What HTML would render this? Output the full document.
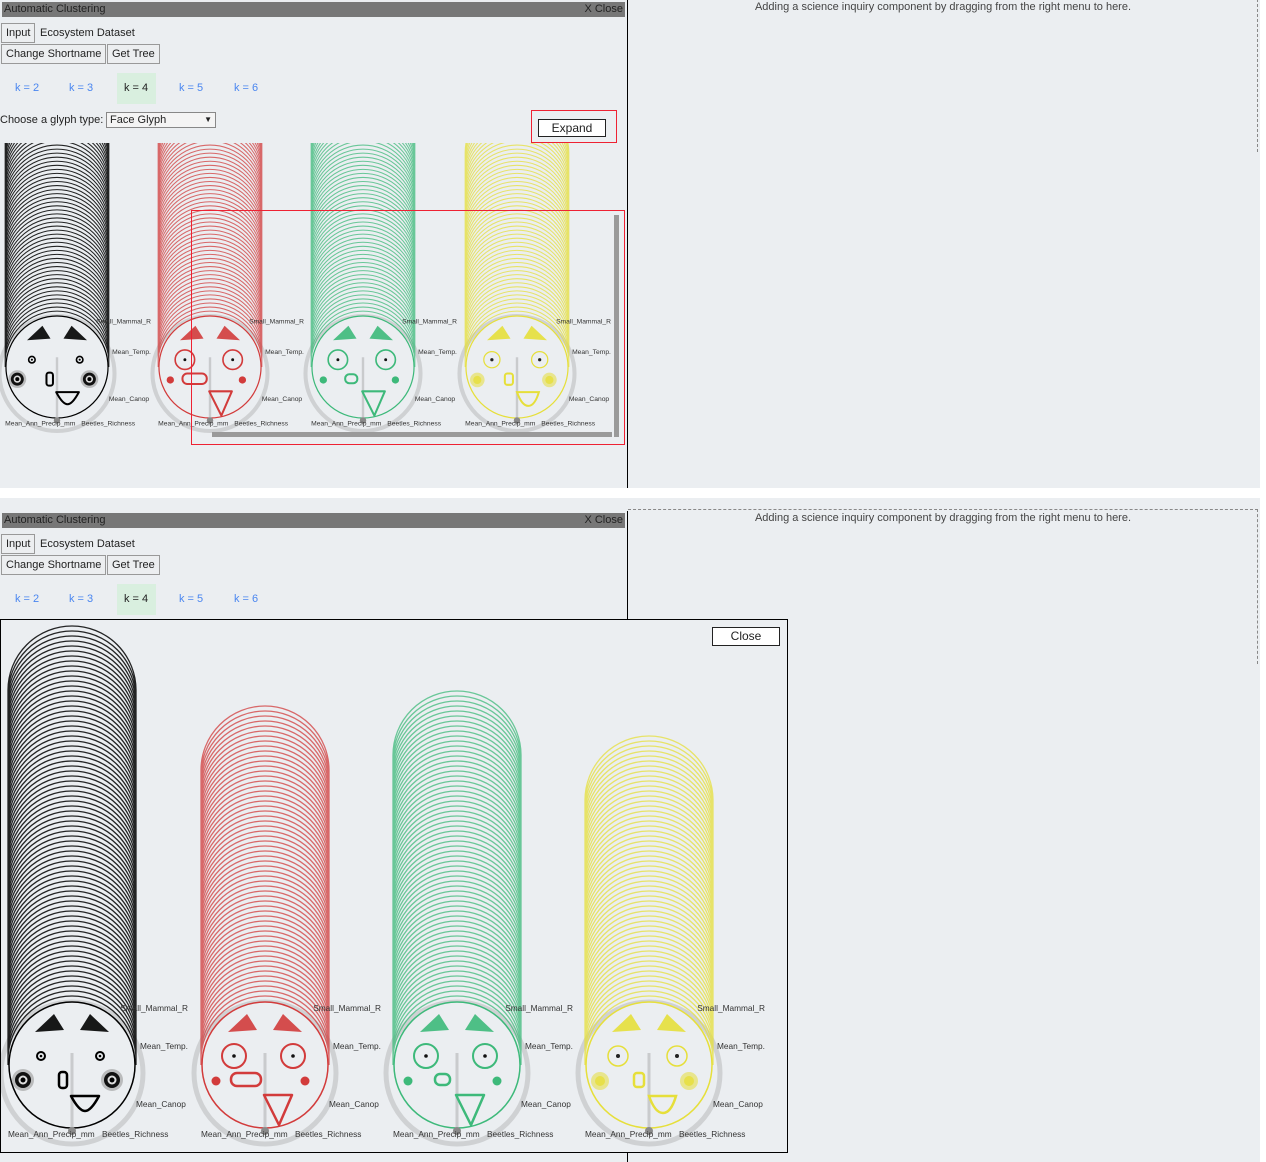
<!DOCTYPE html>
<html><head><meta charset="utf-8"><style>
*{box-sizing:border-box}
body{margin:0;width:1266px;height:1162px;background:#fff;position:relative;overflow:hidden;font-family:"Liberation Sans",sans-serif;font-size:11px;color:#222}
.pane{position:absolute;left:0;width:1260px;background:#ebeef1;overflow:hidden}
.abs{position:absolute}
.title{left:2px;top:2px;width:623px;height:15px;background:#777;color:#222;font-size:11px;line-height:15px;padding-left:2px}
.title span{position:absolute;right:2px}
.btn{position:absolute;height:20px;border:1px solid #999;background:#eceef0;font-size:11px;line-height:18px;padding:0 4px;color:#222}
.k{position:absolute;top:82px;color:#4a86f0;font-size:11px}
.vline{left:627px;width:1px;background:#000}
.right{left:628px;width:630px;border-top:1px dashed #888;border-right:1px dashed #888}
.msg{left:628px;width:630px;text-align:center;top:1px;color:#444;font-size:11px}
svg text{font-family:"Liberation Sans",sans-serif;font-size:8.3px;fill:#333}
</style></head><body>

<div class="pane" style="top:0;height:488px">
 <div class="abs right" style="top:-1px;height:153px"></div>
 <div class="abs msg">Adding a science inquiry component by dragging from the right menu to here.</div>
 <div class="abs vline" style="top:0;height:488px"></div>
 <div class="abs title">Automatic Clustering<span>X Close</span></div>
 <div class="btn" style="left:1px;top:23px">Input</div>
 <div class="abs" style="left:40px;top:27px">Ecosystem Dataset</div>
 <div class="btn" style="left:1px;top:44px">Change Shortname</div>
 <div class="btn" style="left:107px;top:44px">Get Tree</div>
 <div class="k" style="left:15px">k = 2</div>
 <div class="k" style="left:69px">k = 3</div>
 <div class="abs" style="left:117px;top:73px;width:39px;height:31px;background:#d9efdf"></div>
 <div class="k" style="left:124px;color:#222">k = 4</div>
 <div class="k" style="left:179px">k = 5</div>
 <div class="k" style="left:234px">k = 6</div>
 <div class="abs" style="left:0;top:114px">Choose a glyph type:</div>
 <div class="abs" style="left:106px;top:112px;width:110px;height:16px;border:1px solid #888;background:#f4f4f4;padding-left:3px;line-height:14px">Face Glyph<span style="position:absolute;right:3px;font-size:8px">&#9660;</span></div>
 <div class="abs" style="left:531px;top:110px;width:86px;height:33px;border:1px solid #e23"></div>
 <div class="abs" style="left:538px;top:119px;width:68px;height:18px;border:1px solid #222;background:#fff;text-align:center;line-height:16px;font-size:12px">Expand</div>
 <svg class="abs" id="topsvg" style="left:0;top:143px" width="627" height="345">
  <g class="gl" data-c="#000" data-n="75" transform="translate(57,224) scale(0.81)"><text x="116" y="-54" text-anchor="end">Small_Mammal_R</text><text x="68" y="-16">Mean_Temp.</text><text x="64" y="42">Mean_Canop</text><text x="-64" y="72">Mean_Ann_Precip_mm</text><text x="30" y="72">Beetles_Richness</text></g>
  <g class="gl" data-c="#d23b3b" data-n="59" transform="translate(210,224) scale(0.81)"><text x="116" y="-54" text-anchor="end">Small_Mammal_R</text><text x="68" y="-16">Mean_Temp.</text><text x="64" y="42">Mean_Canop</text><text x="-64" y="72">Mean_Ann_Precip_mm</text><text x="30" y="72">Beetles_Richness</text></g>
  <g class="gl" data-c="#3db97a" data-n="62" transform="translate(363,224) scale(0.81)"><text x="116" y="-54" text-anchor="end">Small_Mammal_R</text><text x="68" y="-16">Mean_Temp.</text><text x="64" y="42">Mean_Canop</text><text x="-64" y="72">Mean_Ann_Precip_mm</text><text x="30" y="72">Beetles_Richness</text></g>
  <g class="gl" data-c="#e6df3a" data-n="53" transform="translate(517,224) scale(0.81)"><text x="116" y="-54" text-anchor="end">Small_Mammal_R</text><text x="68" y="-16">Mean_Temp.</text><text x="64" y="42">Mean_Canop</text><text x="-64" y="72">Mean_Ann_Precip_mm</text><text x="30" y="72">Beetles_Richness</text></g>
  <rect x="191.5" y="67.5" width="433" height="234" fill="none" stroke="#e23" stroke-width="1"/>
  <rect x="614" y="72" width="5" height="222" fill="#9a9a9a"/>
  <rect x="212" y="289" width="400" height="5" fill="#9a9a9a"/>
 </svg>
</div>

<div class="pane" style="top:498px;height:664px">
 <div class="abs right" style="top:11px;height:155px"></div>
 <div class="abs msg" style="top:14px">Adding a science inquiry component by dragging from the right menu to here.</div>
 <div class="abs vline" style="top:13px;height:651px"></div>
 <div class="abs title" style="top:15px">Automatic Clustering<span>X Close</span></div>
 <div class="btn" style="left:1px;top:36px">Input</div>
 <div class="abs" style="left:40px;top:40px">Ecosystem Dataset</div>
 <div class="btn" style="left:1px;top:57px">Change Shortname</div>
 <div class="btn" style="left:107px;top:57px">Get Tree</div>
 <div class="k" style="left:15px;top:95px">k = 2</div>
 <div class="k" style="left:69px;top:95px">k = 3</div>
 <div class="abs" style="left:117px;top:86px;width:39px;height:31px;background:#d9efdf"></div>
 <div class="k" style="left:124px;top:95px;color:#222">k = 4</div>
 <div class="k" style="left:179px;top:95px">k = 5</div>
 <div class="k" style="left:234px;top:95px">k = 6</div>
 <div class="abs" style="left:0;top:121px;width:788px;height:534px;border:1px solid #000;background:#ebeef1;overflow:hidden">
  <div class="abs" style="left:711px;top:7px;width:68px;height:19px;border:1px solid #222;background:#fff;text-align:center;line-height:17px;font-size:12px">Close</div>
  <svg class="abs" style="left:0;top:0" width="786" height="532">
   <g class="gl" data-c="#000" data-n="75" transform="translate(71,445)"><text x="116" y="-54" text-anchor="end">Small_Mammal_R</text><text x="68" y="-16">Mean_Temp.</text><text x="64" y="42">Mean_Canop</text><text x="-64" y="72">Mean_Ann_Precip_mm</text><text x="30" y="72">Beetles_Richness</text></g>
   <g class="gl" data-c="#d23b3b" data-n="59" transform="translate(264,445)"><text x="116" y="-54" text-anchor="end">Small_Mammal_R</text><text x="68" y="-16">Mean_Temp.</text><text x="64" y="42">Mean_Canop</text><text x="-64" y="72">Mean_Ann_Precip_mm</text><text x="30" y="72">Beetles_Richness</text></g>
   <g class="gl" data-c="#3db97a" data-n="62" transform="translate(456,445)"><text x="116" y="-54" text-anchor="end">Small_Mammal_R</text><text x="68" y="-16">Mean_Temp.</text><text x="64" y="42">Mean_Canop</text><text x="-64" y="72">Mean_Ann_Precip_mm</text><text x="30" y="72">Beetles_Richness</text></g>
   <g class="gl" data-c="#e6df3a" data-n="53" transform="translate(648,445)"><text x="116" y="-54" text-anchor="end">Small_Mammal_R</text><text x="68" y="-16">Mean_Temp.</text><text x="64" y="42">Mean_Canop</text><text x="-64" y="72">Mean_Ann_Precip_mm</text><text x="30" y="72">Beetles_Richness</text></g>
  </svg>
 </div>
</div>

<script>
var NS="http://www.w3.org/2000/svg";
function el(p,t,a){var e=document.createElementNS(NS,t);for(var k in a)e.setAttribute(k,a[k]);p.appendChild(e);return e;}
var R=64;
document.querySelectorAll('g.gl').forEach(function(g){
 var c=g.getAttribute('data-c'),n=+g.getAttribute('data-n');
 var sh=document.createElementNS(NS,'g');g.insertBefore(sh,g.firstChild);
 el(sh,'circle',{cx:0,cy:8,r:71,fill:'none',stroke:'#cfd1d3','stroke-width':5});
 var d='';
 for(var i=n;i>=1;i--){var y=-i*5;d+='M'+(-R)+' '+y+' A'+R+' '+R+' 0 0 1 '+R+' '+y+' ';}
 d+='M'+(-R)+' '+(-n*5)+' L'+(-R)+' 0 M'+R+' '+(-n*5)+' L'+R+' 0';
 el(sh,'path',{d:d,fill:'none',stroke:c,'stroke-width':1.3,'stroke-opacity':c=='#000'?0.85:0.75});
 el(sh,'circle',{cx:0,cy:0,r:63,fill:'#ebeef1',stroke:c,'stroke-width':1.5});
 el(sh,'line',{x1:0,y1:-12,x2:0,y2:66,stroke:'#c9cbcd','stroke-width':3});
 el(sh,'circle',{cx:0,cy:66,r:4,fill:'#8a8a8a'});
 el(sh,'polygon',{points:'-37,-33 -18,-51 -8,-35',fill:c,opacity:0.9});
 el(sh,'polygon',{points:'37,-33 18,-51 8,-35',fill:c,opacity:0.9});
 var ex=[-31,28],cx=[-49,40];
 if(c=='#000'){
  ex.forEach(function(x){el(sh,'circle',{cx:x,cy:-9,r:4,fill:'none',stroke:c,'stroke-width':2});el(sh,'circle',{cx:x,cy:-9,r:1.3,fill:c});});
  cx.forEach(function(x){el(sh,'circle',{cx:x,cy:15,r:11,fill:'#999',opacity:0.6});el(sh,'circle',{cx:x,cy:15,r:8,fill:'#111'});el(sh,'circle',{cx:x,cy:15,r:4.5,fill:'#ddd'});el(sh,'circle',{cx:x,cy:15,r:2.5,fill:'#000'});});
  el(sh,'rect',{x:-13,y:7,width:8,height:16,rx:3,fill:'none',stroke:c,'stroke-width':2.5});
  el(sh,'path',{d:'M-1 31 L27 31 Q19 46 13 46 Q7 46 -1 31 Z',fill:'none',stroke:c,'stroke-width':2.5,'stroke-linejoin':'round'});
 } else if(c=='#e6df3a'){
  ex.forEach(function(x){el(sh,'circle',{cx:x,cy:-9,r:10,fill:'none',stroke:c,'stroke-width':1.5});el(sh,'circle',{cx:x,cy:-9,r:2,fill:'#222'});});
  cx.forEach(function(x){el(sh,'circle',{cx:x,cy:16,r:9,fill:c,opacity:0.55});el(sh,'circle',{cx:x,cy:16,r:5,fill:c,opacity:0.8});});
  el(sh,'rect',{x:-15,y:8,width:10,height:14,rx:3,fill:'none',stroke:c,'stroke-width':2.5});
  el(sh,'path',{d:'M0 31 L27 31 Q22 48 14 48 Q6 48 0 31 Z',fill:'none',stroke:c,'stroke-width':2.5});
 } else {
  ex.forEach(function(x){el(sh,'circle',{cx:x,cy:-9,r:12,fill:'none',stroke:c,'stroke-width':2});el(sh,'circle',{cx:x,cy:-9,r:1.8,fill:'#111'});});
  cx.forEach(function(x){el(sh,'circle',{cx:x,cy:16,r:4.5,fill:c});});
  if(c=='#d23b3b')el(sh,'rect',{x:-34,y:8,width:30,height:13,rx:6,fill:'none',stroke:c,'stroke-width':2.5});
  else el(sh,'rect',{x:-22,y:9,width:15,height:11,rx:5,fill:'none',stroke:c,'stroke-width':2.5});
  el(sh,'path',{d:'M-1 30 L27 30 L14 60 Z',fill:'none',stroke:c,'stroke-width':2.5,'stroke-linejoin':'round'});
 }
});
</script>
</body></html>
